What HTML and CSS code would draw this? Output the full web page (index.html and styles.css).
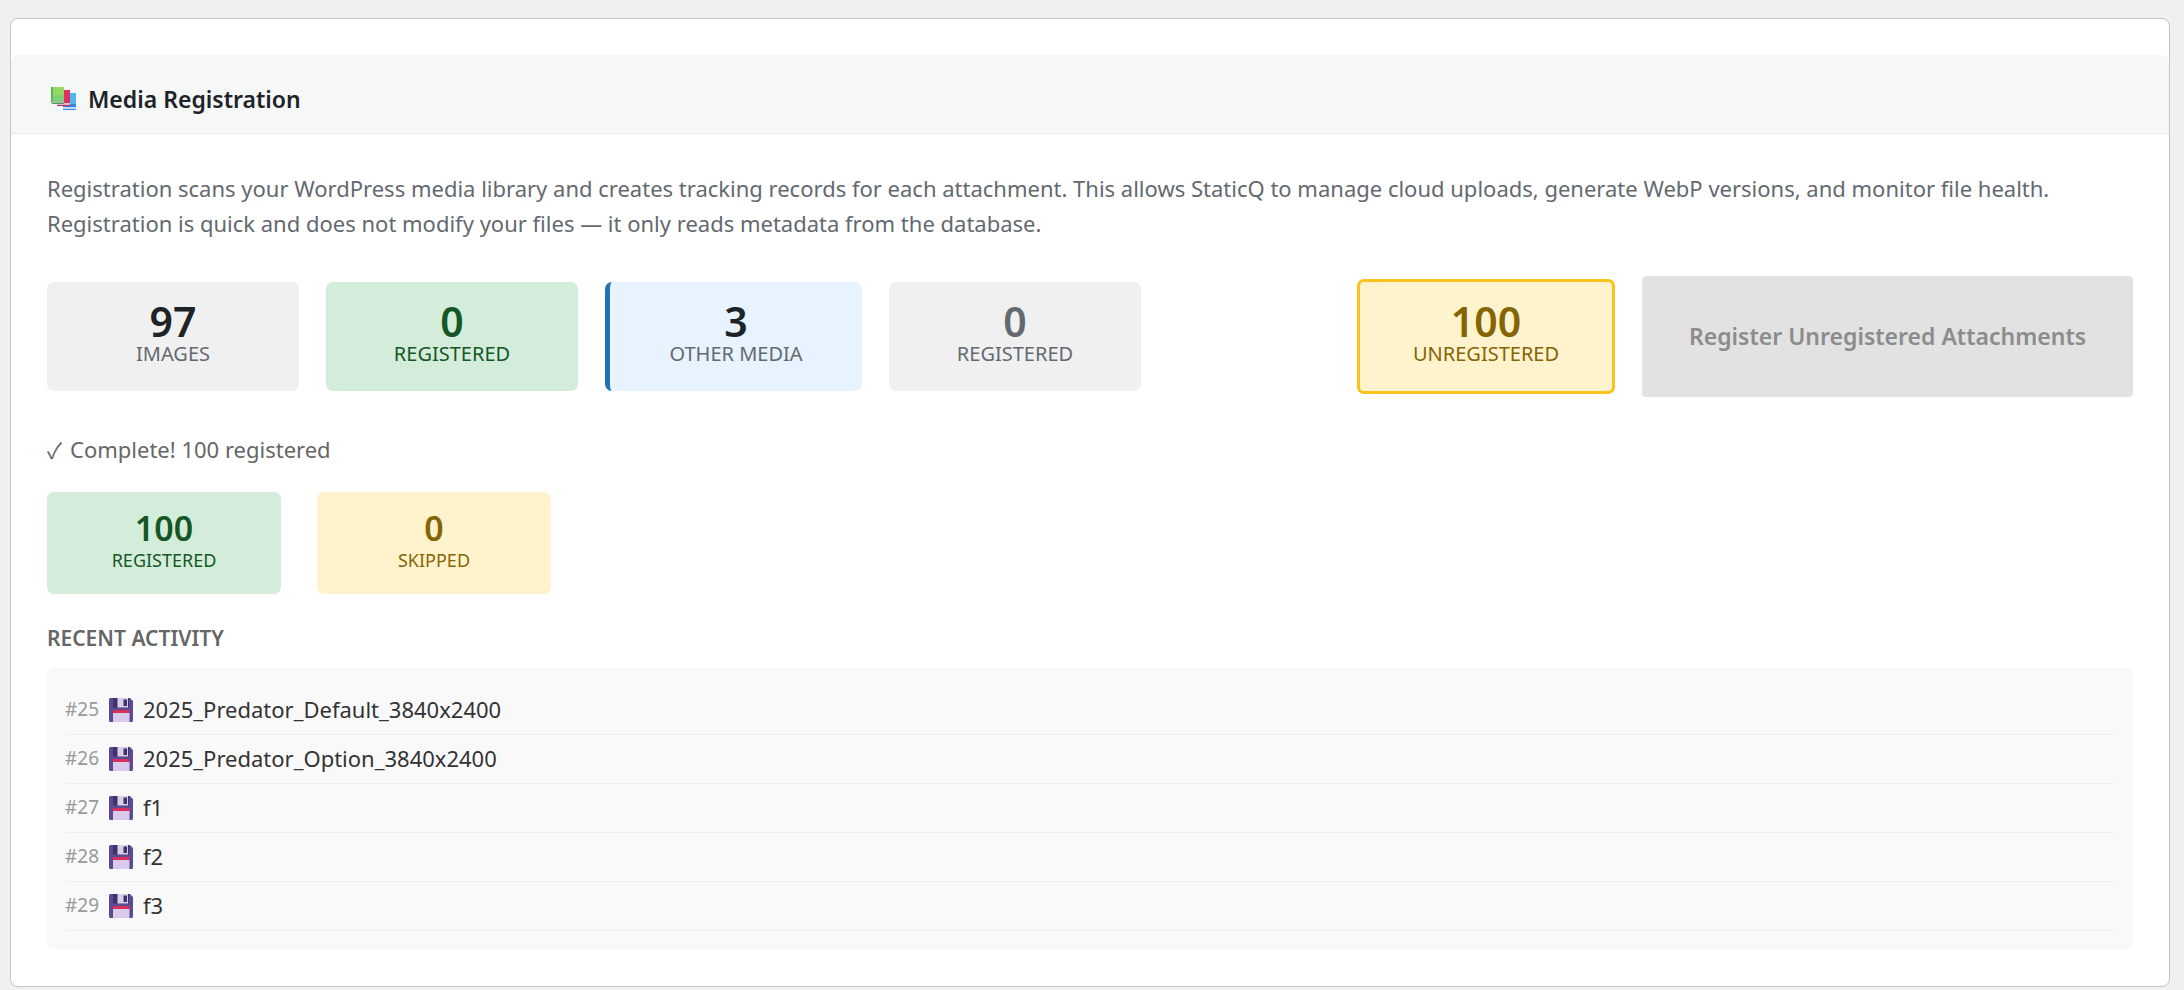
FILE: index.html
```
<!DOCTYPE html>
<html lang="en">
<head>
    <meta charset="UTF-8">
    <meta name="viewport" content="width=device-width, initial-scale=1.0">
    <title>Media Registration</title>
    <link rel="stylesheet" href="styles.css">
</head>
<body>

<!-- shared icons -->
<svg class="icon-defs" width="0" height="0" aria-hidden="true">
    <symbol id="icon-floppy" viewBox="0 0 24 24">
        <path d="M1.500 0H21l3 3v19.500a1.500 1.500 0 0 1-1.500 1.500h-21A1.500 1.500 0 0 1 0 22.500v-21A1.500 1.500 0 0 1 1.500 0z" fill="#5b4a94"/>
        <path d="M4 0h16v8.500a1 1 0 0 1-1 1H5a1 1 0 0 1-1-1z" fill="#40306e"/>
        <path d="M8.500 0H19v9.500H8.500z" fill="#d9d0e6"/>
        <path d="M14.500 1.500h3.500v6.500h-3.500z" fill="#40306e"/>
        <path d="M4 12h16.500v3H4z" fill="#d8305a"/>
        <path d="M4 15h16.500v9H4z" fill="#d9c9ea"/>
    </symbol>
</svg>

<main class="card">
    <header class="card-header">
        <h2 class="card-title">
            <svg class="title-icon" viewBox="0 0 26 26" aria-hidden="true">
                <path d="M12 7h13v14H12z" fill="#4db8ef"/>
                <path d="M12 18h13v3H12z" fill="#3a82dc"/>
                <path d="M12 21h13v2H12z" fill="#c3d6f2"/>
                <path d="M12 23h13v1H12z" fill="#4a8ae0"/>
                <path d="M6 4h13v13H6z" fill="#e0305c"/>
                <path d="M6 17h13v2H6z" fill="#e3bccb"/>
                <path d="M6 19h13v1H6z" fill="#b92a58"/>
                <path d="M0 1h13v14H0z" fill="#92d863"/>
                <path d="M0 1h2v16H0z" fill="#5fb357"/>
                <path d="M2 9h11v6H2z" fill="#7cd077"/>
                <path d="M1 15h12v2H1z" fill="#a5b8a8"/>
                <path d="M1 17h12v1H1z" fill="#4f9c5a"/>
            </svg>
            Media Registration
        </h2>
    </header>

    <div class="card-body">
        <p class="description">Registration scans your WordPress media library and creates tracking records for each attachment. This allows StaticQ to manage cloud uploads, generate WebP versions, and monitor file health. Registration is quick and does not modify your files — it only reads metadata from the database.</p>

        <div class="stats-row">
            <div class="stat">
                <div class="stat-number">97</div>
                <div class="stat-label">Images</div>
            </div>
            <div class="stat stat-success">
                <div class="stat-number">0</div>
                <div class="stat-label">Registered</div>
            </div>
            <div class="stat stat-info">
                <div class="stat-number">3</div>
                <div class="stat-label">Other Media</div>
            </div>
            <div class="stat stat-muted">
                <div class="stat-number">0</div>
                <div class="stat-label">Registered</div>
            </div>
            <div class="stats-action">
                <div class="stat stat-warning stat-outlined">
                    <div class="stat-number">100</div>
                    <div class="stat-label">Unregistered</div>
                </div>
                <button type="button" class="register-button" disabled>Register Unregistered Attachments</button>
            </div>
        </div>

        <p class="status"><span class="check">✓</span> Complete! 100 registered</p>

        <div class="results-row">
            <div class="stat stat-small stat-success">
                <div class="stat-number">100</div>
                <div class="stat-label">Registered</div>
            </div>
            <div class="stat stat-small stat-warning">
                <div class="stat-number">0</div>
                <div class="stat-label">Skipped</div>
            </div>
        </div>

        <h3 class="activity-title">Recent Activity</h3>
        <ul class="activity-list">
            <li class="activity-item">
                <span class="activity-id">#25</span>
                <svg class="activity-icon" aria-hidden="true"><use href="#icon-floppy"/></svg>
                <span>2025_Predator_Default_3840x2400</span>
            </li>
            <li class="activity-item">
                <span class="activity-id">#26</span>
                <svg class="activity-icon" aria-hidden="true"><use href="#icon-floppy"/></svg>
                <span>2025_Predator_Option_3840x2400</span>
            </li>
            <li class="activity-item">
                <span class="activity-id">#27</span>
                <svg class="activity-icon" aria-hidden="true"><use href="#icon-floppy"/></svg>
                <span>f1</span>
            </li>
            <li class="activity-item">
                <span class="activity-id">#28</span>
                <svg class="activity-icon" aria-hidden="true"><use href="#icon-floppy"/></svg>
                <span>f2</span>
            </li>
            <li class="activity-item">
                <span class="activity-id">#29</span>
                <svg class="activity-icon" aria-hidden="true"><use href="#icon-floppy"/></svg>
                <span>f3</span>
            </li>
        </ul>
    </div>
</main>

</body>
</html>
```
FILE: styles.css
```
* {
    box-sizing: border-box;
}

body {
    margin: 0;
    padding: 18px 14px 3px 10px;
    background-color: #f0f0f1;
    color: #1d2327;
    font-family: "Noto Sans", "Open Sans", sans-serif;
    font-size: 22px;
}

.icon-defs {
    position: absolute;
}

.card {
    padding-top: 36px;
    background-color: #fff;
    border: 1px solid #c3c4c7;
    border-radius: 8px;
}

.card-header {
    padding: 27px 40px 17px;
    background-color: #f6f7f7;
    border-bottom: 1px solid #e8e9ea;
    border-radius: 8px 8px 0 0;
}

.card-title {
    display: flex;
    align-items: center;
    gap: 11px;
    margin: 0;
    font-size: 23px;
    font-weight: 600;
    line-height: 34px;
}

.title-icon {
    width: 26px;
    height: 26px;
}

.card-body {
    padding: 37px 36px;
}

.description {
    margin: 0 0 35px;
    color: #646970;
    line-height: 35px;
}

.stats-row {
    display: flex;
    align-items: center;
    gap: 27px;
}

.stats-action {
    display: flex;
    align-items: center;
    gap: 27px;
    margin-left: auto;
}

.stat {
    min-width: 252px;
    padding: 18px 18px 26px;
    background-color: #f0f0f1;
    border-radius: 7px;
    text-align: center;
}

.stat-number {
    font-size: 41px;
    font-weight: 600;
    line-height: 42px;
}

.stat-label {
    color: #646970;
    font-size: 20px;
    line-height: 23px;
    text-transform: uppercase;
}

.stat-success {
    background-color: #d4edda;
}

.stat-success .stat-number,
.stat-success .stat-label {
    color: #155724;
}

.stat-info {
    min-width: 257px;
    background-color: #e7f3ff;
    border-left: 5px solid #2271b1;
}

.stat-muted .stat-number {
    color: #646970;
}

.stat-warning {
    background-color: #fff3cd;
}

.stat-warning .stat-number,
.stat-warning .stat-label {
    color: #856404;
}

.stat-outlined {
    min-width: 258px;
    border: 3px solid #f9c31c;
}

.register-button {
    min-width: 491px;
    padding: 43px 36px;
    background-color: #e2e2e2;
    border: 1px solid #e2e2e2;
    border-radius: 4px;
    color: #8c8c8c;
    font-family: inherit;
    font-size: 23px;
    font-weight: 600;
    line-height: 33px;
}

.status {
    display: flex;
    gap: 8px;
    margin: 35px 0 25px;
    color: #666;
    line-height: 35px;
}

.check {
    font-family: "Noto Sans CJK SC", "DejaVu Sans", sans-serif;
}

.results-row {
    display: flex;
    gap: 36px;
    margin-bottom: 27px;
}

.stat-small {
    min-width: 234px;
    padding: 18px 18px 22px;
}

.stat-small .stat-number {
    margin-bottom: 3px;
    font-size: 34px;
    line-height: 36px;
}

.stat-small .stat-label {
    font-size: 18px;
}

.activity-title {
    margin: 0 0 12px;
    color: #666;
    font-size: 21px;
    font-weight: 600;
    line-height: 35px;
    text-transform: uppercase;
}

.activity-list {
    margin: 0;
    padding: 18px;
    background-color: #f9f9f9;
    border-radius: 7px;
    list-style: none;
}

.activity-item {
    display: flex;
    align-items: center;
    gap: 10px;
    padding: 6px 0 7px;
    border-bottom: 1px solid #eee;
    color: #333;
    line-height: 35px;
}

.activity-id {
    color: #999;
    font-size: 19px;
}

.activity-icon {
    width: 24px;
    height: 24px;
}
```
